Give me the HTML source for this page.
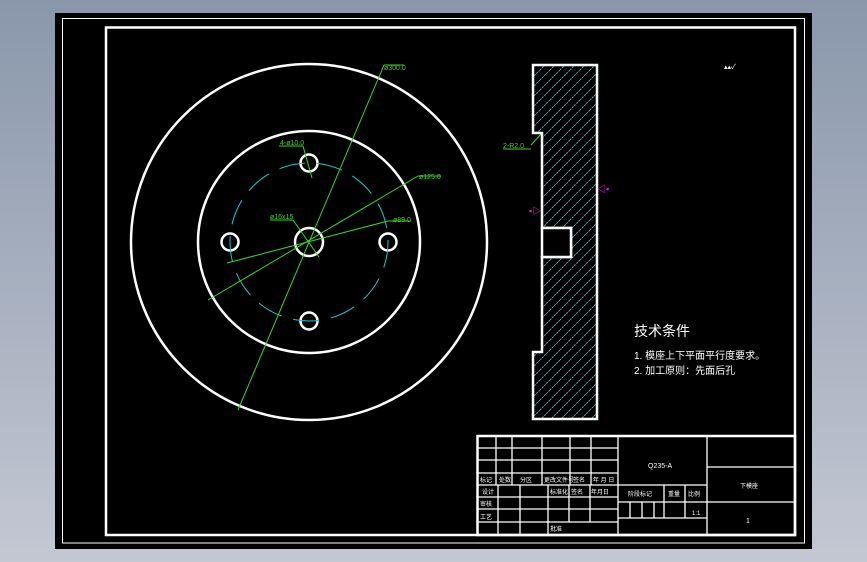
<!DOCTYPE html>
<html><head><meta charset="utf-8"><style>
html,body{margin:0;padding:0;width:867px;height:562px;overflow:hidden;background:linear-gradient(#8a97ab,#c3c8d3);}
svg{position:absolute;left:0;top:0}
text{font-family:"Liberation Sans","Noto Sans CJK SC",sans-serif;}
</style></head><body>
<svg width="867" height="562" viewBox="0 0 867 562">
<defs>
<pattern id="h" patternUnits="userSpaceOnUse" width="10" height="10">
<path d="M0 10 L10 0 M-2 2 L2 -2 M8 12 L12 8" stroke="#1fd0d8" stroke-width="0.9" stroke-dasharray="2 1"/>
</pattern>
</defs>
<rect x="55" y="13" width="757" height="536" fill="#000"/>
<rect x="62.5" y="18.5" width="742" height="524.5" fill="none" stroke="#fff" stroke-width="1"/>
<rect x="106" y="27.5" width="689" height="507.5" fill="none" stroke="#fff" stroke-width="2.5"/>

<g fill="none" stroke="#fff" stroke-width="2.5">
<circle cx="309" cy="242" r="178"/>
<circle cx="309" cy="242" r="111"/>
<circle cx="309" cy="242" r="14"/>
<circle cx="309" cy="163" r="8.5"/>
<circle cx="309" cy="321" r="8.5"/>
<circle cx="230" cy="242" r="8.5"/>
<circle cx="388" cy="242" r="8.5"/>
</g>
<circle cx="309" cy="242" r="79" fill="none" stroke="#1fc8d0" stroke-width="1" stroke-dasharray="26 12"/>
<g stroke="#3cd428" stroke-width="1" fill="none">
<line x1="238" y1="410" x2="384" y2="65"/><line x1="384" y1="65" x2="404" y2="65"/>
<line x1="208" y1="300" x2="418" y2="176"/><line x1="418" y1="176" x2="441" y2="176"/>
<line x1="227" y1="263" x2="388" y2="221"/><line x1="388" y1="221" x2="411" y2="221"/>
<line x1="319" y1="257" x2="293" y2="220"/><line x1="293" y1="220" x2="270" y2="220"/>
<line x1="312" y1="178" x2="303" y2="146"/><line x1="303" y1="146" x2="279" y2="146"/>
<line x1="531" y1="145" x2="542" y2="133"/><line x1="503" y1="149" x2="531" y2="149"/>
</g>
<g fill="#3cd428" font-size="7">
<text x="384" y="70">ø300.0</text>
<text x="419" y="179">ø125.0</text>
<text x="393" y="222">ø89.0</text>
<text x="270" y="219">ø16x15</text>
<text x="280" y="145">4-ø10.0</text>
<text x="503" y="148">2-R2.0</text>
</g>

<path d="M533 65 H597 V419 H533 V352 H542 V257 H571 V228 H542 V133 H533 Z" fill="url(#h)" stroke="#fff" stroke-width="2.5"/>
<path d="M542 228 H571 V257 H542 Z" fill="#000" stroke="#fff" stroke-width="2.5"/>
<g fill="#e020e0" font-size="9" font-weight="bold"><text x="597" y="192">◁▪</text><text x="529" y="214">▪▷</text></g>
<text x="724" y="69" fill="#fff" font-size="7">▴▴✓</text>

<g fill="#fff">
<text x="634" y="336" font-size="14">技术条件</text>
<text x="634" y="359" font-size="10">1. 模座上下平面平行度要求。</text>
<text x="634" y="374" font-size="10">2. 加工原则：先面后孔</text>
</g>

<g stroke="#fff" stroke-width="1.3" fill="none">
<rect x="477.5" y="436" width="317.5" height="99" stroke-width="2.5"/>
<line x1="477" y1="448" x2="618" y2="448"/>
<line x1="477" y1="460" x2="618" y2="460"/>
<line x1="477" y1="473" x2="618" y2="473"/>
<line x1="477" y1="485" x2="707" y2="485"/>
<line x1="477" y1="497" x2="618" y2="497"/>
<line x1="477" y1="509" x2="618" y2="509"/>
<line x1="477" y1="522" x2="618" y2="522"/>
<line x1="618" y1="502" x2="795" y2="502"/>
<line x1="618" y1="518" x2="707" y2="518"/>
<line x1="707" y1="467" x2="795" y2="467"/>
<line x1="618" y1="436" x2="618" y2="535"/>
<line x1="707" y1="436" x2="707" y2="535"/>
<line x1="496" y1="436" x2="496" y2="485"/>
<line x1="512" y1="436" x2="512" y2="485"/>
<line x1="542" y1="436" x2="542" y2="485"/>
<line x1="570" y1="436" x2="570" y2="485"/>
<line x1="591" y1="436" x2="591" y2="485"/>
<line x1="498" y1="485" x2="498" y2="535"/>
<line x1="520" y1="485" x2="520" y2="535"/>
<line x1="548" y1="485" x2="548" y2="535"/>
<line x1="569" y1="485" x2="569" y2="522"/>
<line x1="590" y1="485" x2="590" y2="522"/>
<line x1="664" y1="485" x2="664" y2="518"/>
<line x1="685" y1="485" x2="685" y2="518"/>
<line x1="630" y1="502" x2="630" y2="518"/>
<line x1="642" y1="502" x2="642" y2="518"/>
<line x1="654" y1="502" x2="654" y2="518"/>
</g>
<g fill="#fff" font-size="6">
<text x="480" y="482">标记</text><text x="499" y="482">处数</text><text x="520" y="482">分区</text><text x="544" y="482">更改文件号</text><text x="573" y="482">签名</text><text x="593" y="482">年 月 日</text>
<text x="482" y="494">设计</text><text x="550" y="494">标准化</text><text x="571" y="494">签名</text><text x="591" y="494">年月日</text>
<text x="480" y="506">审核</text><text x="480" y="519">工艺</text><text x="550" y="531">批准</text>
<text x="628" y="496">阶段标记</text><text x="668" y="496">重量</text><text x="688" y="496">比例</text>
<text x="692" y="515">1:1</text>
<text x="648" y="468" font-size="7">Q235-A</text>
<text x="740" y="488">下模座</text>
<text x="746" y="523" font-size="7">1</text>
</g>
</svg>
</body></html>
